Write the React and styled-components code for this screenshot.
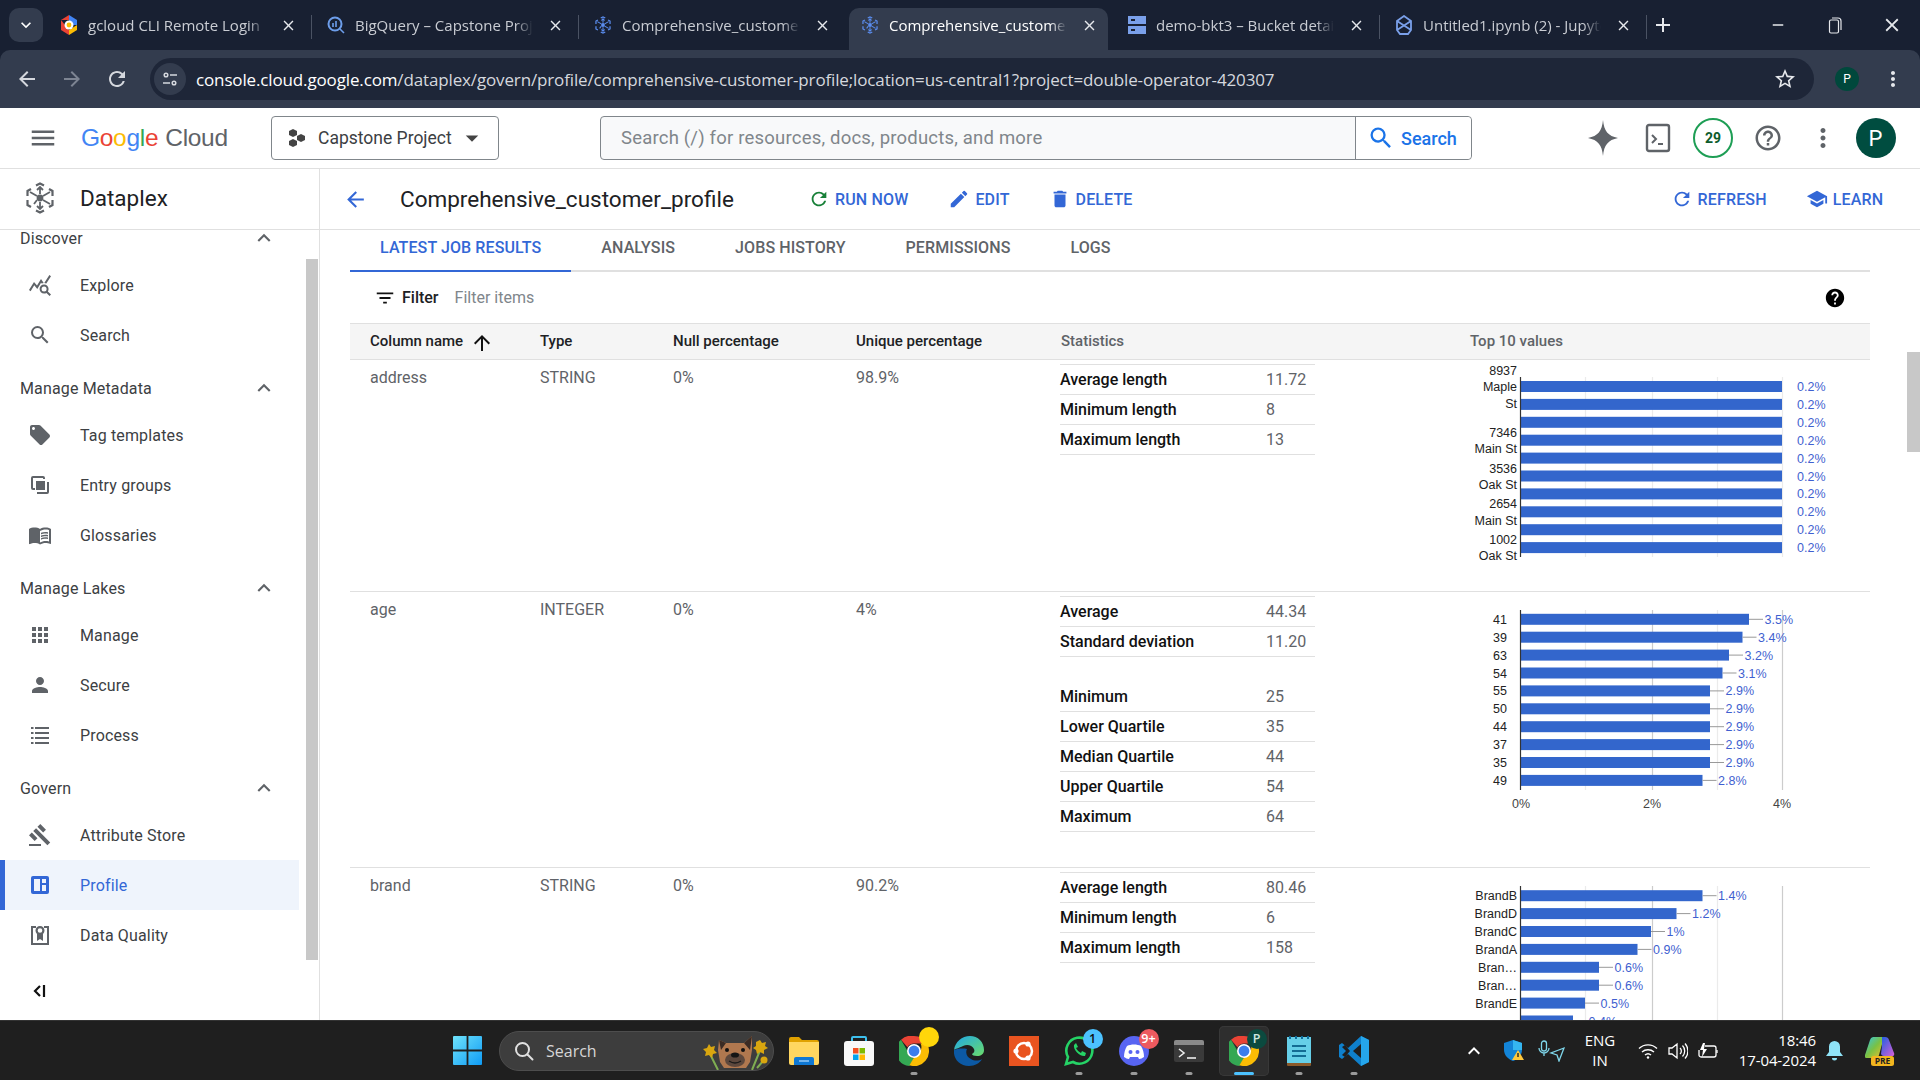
import React from "react";
import styled, { createGlobalStyle } from "styled-components";
import {
  MdMenu, MdSearch, MdLocalOffer, MdMenuBook, MdApps, MdPerson, MdGavel, MdRefresh, MdEdit, MdDelete,
  MdSchool, MdArrowBack, MdArrowForward, MdArrowUpward, MdFilterList, MdHelp, MdHelpOutline, MdMoreVert, MdExpandLess,
  MdStarBorder, MdQueryStats, MdClose, MdAdd, MdKeyboardArrowDown, MdArrowDropDown, MdRemove,
} from "react-icons/md";

const GlobalStyle = createGlobalStyle`
  html, body { margin: 0; padding: 0; background: #fff; overflow: hidden; }
  * { box-sizing: border-box; }
  body { font-family: Roboto, "Liberation Sans", sans-serif; }
`;

const Page = styled.div`
  width: 1920px;
  height: 1080px;
  display: flex;
  flex-direction: column;
  overflow: hidden;
`;

/* browser chrome */
const Chrome = styled.div`
  background: #182032;
  flex: none;
`;

const TabStrip = styled.div`
  height: 50px;
  display: flex;
  align-items: flex-end;
  padding-left: 9px;
  font-family: "Open Sans", "Liberation Sans", sans-serif;
`;

const TabMenu = styled.div`
  width: 34px;
  height: 34px;
  margin: 0 1px 8px 0;
  border-radius: 10px;
  background: #333c4e;
  color: #fff;
  display: flex;
  align-items: center;
  justify-content: center;
`;

const Tab = styled.div`
  position: relative;
  width: 259px;
  height: 42px;
  margin: 0 4px;
  display: flex;
  align-items: center;
  padding: 0 10px 8px 12px;
  border-radius: 10px 10px 0 0;
  background: ${(p) => (p.$active ? "#333c4e" : "transparent")};
  color: ${(p) => (p.$active ? "#fff" : "#c9ccd3")};
  font-size: 15px;
  &::after {
    content: "";
    display: ${(p) => (p.$sep ? "block" : "none")};
    position: absolute;
    right: -5px;
    top: 7px;
    height: 24px;
    width: 1px;
    background: #4a5263;
  }
`;

const TabIcon = styled.span`
  width: 18px;
  height: 20px;
  flex: none;
  display: flex;
  align-items: center;
  margin-right: 10px;
`;

const TabTitle = styled.span`
  width: 178px;
  white-space: nowrap;
  overflow: hidden;
  -webkit-mask-image: linear-gradient(90deg, #000 90%, transparent);
  mask-image: linear-gradient(90deg, #000 90%, transparent);
`;

const TabClose = styled(MdClose)`
  margin-left: auto;
  flex: none;
  font-size: 17px;
  color: #e6e8ec;
`;

const NewTab = styled(MdAdd)`
  margin: 0 0 13px 5px;
  font-size: 24px;
  color: #e6e8ec;
`;

const WindowControls = styled.div`
  margin-left: auto;
  height: 50px;
  display: flex;
  align-items: center;
  color: #e6e8ec;
`;

const WindowButton = styled.span`
  width: 57px;
  display: flex;
  justify-content: center;
  font-size: 20px;
`;

const Toolbar = styled.div`
  height: 58px;
  background: #333c4e;
  border-radius: 10px 10px 0 0;
  display: flex;
  align-items: center;
  padding-left: 15px;
  color: #d5d8de;
`;

const NavButton = styled.span`
  width: 45px;
  flex: none;
  display: flex;
  font-size: 24px;
  color: ${(p) => (p.$dim ? "#7d8492" : "#d5d8de")};
`;

const UrlBar = styled.div`
  width: 1664px;
  height: 42px;
  border-radius: 21px;
  background: #1e2638;
  display: flex;
  align-items: center;
  padding: 0 17px 0 4px;
`;

const TuneBadge = styled.span`
  width: 32px;
  height: 32px;
  border-radius: 50%;
  background: #333c4e;
  display: flex;
  align-items: center;
  justify-content: center;
  margin-right: 10px;
`;

const UrlText = styled.div`
  font-family: "Open Sans", "Liberation Sans", sans-serif;
  font-size: 17px;
  letter-spacing: -0.14px;
  color: #d5d8de;
  white-space: nowrap;
  b { font-weight: 400; color: #fff; }
`;

const UrlStar = styled(MdStarBorder)`
  margin-left: auto;
  font-size: 24px;
  color: #e6e8ec;
`;

const SmallAvatar = styled.span`
  width: 24px;
  height: 24px;
  margin-left: 21px;
  border-radius: 50%;
  background: #00483c;
  color: #fff;
  font-size: 12px;
  display: flex;
  align-items: center;
  justify-content: center;
`;

const ToolbarDots = styled(MdMoreVert)`
  font-size: 24px;
  margin-left: 22px;
  color: #e6e8ec;
`;

/* console header */
const Header = styled.header`
  height: 61px;
  flex: none;
  border-bottom: 1px solid #e0e0e0;
  display: flex;
  align-items: center;
  padding-left: 31px;
`;

const Burger = styled(MdMenu)`
  font-size: 30px;
  margin-left: -3px;
  color: #5f6368;
  flex: none;
`;

const Logo = styled.div`
  width: 190px;
  margin-left: 23px;
  font-family: "Liberation Sans", Arial, sans-serif;
  font-size: 24.5px;
  letter-spacing: -0.3px;
  white-space: nowrap;
`;

const Letter = styled.span`
  color: ${(p) => p.$c};
`;

const CloudWord = styled.span`
  margin-left: 7px;
  color: #5f6368;
`;

const ProjectPicker = styled.div`
  width: 228px;
  height: 44px;
  border: 1px solid #80868b;
  border-radius: 4px;
  display: flex;
  align-items: center;
  padding-left: 16px;
  font-size: 17.5px;
  color: #3c4043;
`;

const ProjectName = styled.span`
  margin-left: 12px;
`;

const ProjectCaret = styled(MdArrowDropDown)`
  font-size: 30px;
  color: #444;
  margin-left: 5px;
`;

const SearchBox = styled.div`
  width: 872px;
  height: 44px;
  margin-left: 101px;
  border: 1px solid #80868b;
  border-radius: 4px;
  background: #f8f9fa;
  display: flex;
  font-size: 18.5px;
  color: #80868b;
`;

const SearchField = styled.div`
  width: 755px;
  padding-left: 20px;
  display: flex;
  align-items: center;
  border-right: 1px solid #80868b;
  letter-spacing: 0.2px;
  white-space: nowrap;
`;

const SearchButton = styled.div`
  flex: 1;
  background: #fff;
  border-radius: 0 4px 4px 0;
  display: flex;
  align-items: center;
  padding-left: 11px;
  gap: 6px;
  font-size: 18px;
  color: #1a73e8;
  font-weight: 500;
`;

const HeaderTools = styled.div`
  margin-left: 103.5px;
  display: flex;
  align-items: center;
  color: #5f6368;
`;

const HeaderTool = styled.span`
  width: 55px;
  display: flex;
  justify-content: center;
  font-size: 28px;
`;

const TrialBadge = styled.span`
  width: 40px;
  height: 40px;
  border-radius: 50%;
  border: 2px solid #1e9e55;
  color: #0d5c2c;
  font-size: 14px;
  font-weight: 700;
  display: flex;
  align-items: center;
  justify-content: center;
`;

const Avatar = styled.span`
  width: 40px;
  height: 40px;
  margin-left: 5px;
  border-radius: 50%;
  background: #004d40;
  color: #fff;
  font-size: 22px;
  display: flex;
  align-items: center;
  justify-content: center;
`;

const Body = styled.div`
  flex: 1;
  min-height: 0;
  display: flex;
`;

/* left nav */
const Sidebar = styled.aside`
  position: relative;
  width: 320px;
  flex: none;
  border-right: 1px solid #e0e0e0;
  display: flex;
  flex-direction: column;
  overflow: hidden;
`;

const ProductBar = styled.div`
  height: 61px;
  flex: none;
  border-bottom: 1px solid #e0e0e0;
  display: flex;
  align-items: center;
  padding: 0 0 2px 24px;
  font-size: 22.5px;
  color: #202124;
  background: #fff;
  z-index: 1;
`;

const ProductName = styled.span`
  margin-left: 24px;
`;

const NavList = styled.nav`
  margin-top: -14px;
`;

const NavGroup = styled.div`
  height: 44px;
  margin-top: ${(p) => (p.$first ? 0 : 6)}px;
  width: 274px;
  padding: 0 0 0 20px;
  display: flex;
  align-items: center;
  justify-content: space-between;
  font-size: 16px;
  letter-spacing: 0.15px;
  color: #3c4043;
`;

const GroupChevron = styled(MdExpandLess)`
  font-size: 26px;
  color: #5f6368;
  margin-right: -3px;
`;

const NavItem = styled.div`
  position: relative;
  width: 299px;
  height: 50px;
  display: flex;
  align-items: center;
  font-size: 16px;
  letter-spacing: 0.15px;
  color: ${(p) => (p.$active ? "#3367d6" : "#3c4043")};
  background: ${(p) => (p.$active ? "#eff4fc" : "transparent")};
  border-left: 5px solid ${(p) => (p.$active ? "#3367d6" : "transparent")};
`;

const NavIcon = styled.span`
  width: 70px;
  padding-left: 23px;
  margin-right: 5px;
  flex: none;
  display: flex;
  font-size: 24px;
  color: ${(p) => (p.$active ? "#3367d6" : "#5f6368")};
`;

const CollapseRow = styled.div`
  height: 50px;
  margin-top: 6px;
  padding-left: 28px;
  display: flex;
  align-items: center;
`;

const SideThumb = styled.div`
  position: absolute;
  left: 306px;
  top: 90px;
  width: 12px;
  height: 701px;
  background: #c8c8c8;
`;

/* main */
const Main = styled.main`
  position: relative;
  flex: 1;
  min-width: 0;
  overflow: hidden;
`;

const MainBar = styled.div`
  height: 61px;
  border-bottom: 1px solid #e0e0e0;
  display: flex;
  align-items: center;
  padding-left: 23px;
`;

const BackArrow = styled(MdArrowBack)`
  font-size: 25px;
  color: #3367d6;
  flex: none;
`;

const Title = styled.h1`
  margin: 0 0 0 32px;
  width: 408px;
  flex: none;
  font-size: 22.5px;
  font-weight: 400;
  color: #202124;
  white-space: nowrap;
`;

const Action = styled.div`
  display: flex;
  align-items: center;
  gap: 5px;
  margin-left: ${(p) => p.$ml}px;
  font-size: 16px;
  letter-spacing: 0.15px;
  font-weight: 500;
  color: #3367d6;
  white-space: nowrap;
  svg { font-size: 22px; color: ${(p) => p.$icon || "#3367d6"}; flex: none; }
`;

const Content = styled.div`
  width: 1520px;
  margin-left: 30px;
`;

const TabBar = styled.div`
  height: 42px;
  display: flex;
  border-bottom: 2px solid #e0e0e0;
`;

const ContentTab = styled.div`
  height: 42px;
  padding: 0 30px 5px;
  display: flex;
  align-items: center;
  font-size: 16px;
  letter-spacing: 0.1px;
  font-weight: 500;
  white-space: nowrap;
  color: ${(p) => (p.$active ? "#3367d6" : "#5f6368")};
  border-bottom: 2px solid ${(p) => (p.$active ? "#3367d6" : "transparent")};
`;

const FilterBar = styled.div`
  height: 51px;
  display: flex;
  align-items: center;
  padding-left: 24px;
  font-size: 16px;
`;

const FilterLabel = styled.span`
  margin-left: 6px;
  font-weight: 500;
  color: #202124;
`;

const FilterHint = styled.span`
  margin-left: 16px;
  color: #80868b;
`;

const FilterHelp = styled(MdHelp)`
  margin-left: auto;
  margin-right: 24px;
  font-size: 22px;
  color: #000;
`;

const Grid = "170px 133px 183px 204px 410px 420px";

const TableHead = styled.div`
  height: 37px;
  padding-bottom: 1px;
  display: grid;
  grid-template-columns: ${Grid};
  align-items: center;
  background: #f5f5f5;
  border-top: 1px solid #e0e0e0;
  border-bottom: 1px solid #e0e0e0;
  font-size: 15px;
  font-weight: 500;
`;

const HeadCell = styled.div`
  padding-left: ${(p) => p.$pl ?? 20}px;
  color: ${(p) => (p.$muted ? "#5f6368" : "#202124")};
  display: flex;
  align-items: center;
  white-space: nowrap;
`;

const SortArrow = styled(MdArrowUpward)`
  font-size: 24px;
  color: #111;
  margin-left: 7px;
  margin-bottom: -3px;
`;

const TableRow = styled.div`
  height: ${(p) => p.$h}px;
  display: grid;
  grid-template-columns: ${Grid};
  border-bottom: 1px solid #e0e0e0;
`;

const Cell = styled.div`
  padding: 8px 0 0 20px;
  font-size: 16px;
  line-height: 20px;
  color: #5f6368;
`;

const StatCell = styled.div`
  padding: 4px 0 0 20px;
`;

const StatGroup = styled.div`
  width: 255px;
  margin-bottom: 25px;
  border-top: ${(p) => (p.$plain ? "none" : "1px solid #e0e0e0")};
`;

const StatRow = styled.div`
  height: 30px;
  display: grid;
  grid-template-columns: 206px 1fr;
  align-items: center;
  border-bottom: 1px solid #e0e0e0;
  font-size: 16px;
`;

const StatLabel = styled.span`
  font-weight: 500;
  color: #111;
`;

const StatValue = styled.span`
  color: #5f6368;
`;

const ChartSvg = styled.svg`
  display: block;
  overflow: visible;
  font-family: "Liberation Sans", Arial, sans-serif;
  font-size: 12.5px;
`;

const MainThumb = styled.div`
  position: absolute;
  right: 0;
  top: 183px;
  width: 13px;
  height: 100px;
  background: #c8c8c8;
`;

/* windows taskbar */
const Taskbar = styled.footer`
  height: 60px;
  flex: none;
  background: #1f1f1f;
  border-top: 1px solid #333;
  display: flex;
  align-items: center;
  padding-left: 453px;
  color: #fff;
  font-family: "Open Sans", "Liberation Sans", sans-serif;
`;

const TaskSearch = styled.div`
  position: relative;
  width: 275px;
  height: 40px;
  margin: 0 2px 0 17px;
  border-radius: 20px;
  background: #3d3d3d;
  border: 1px solid #4d4d4d;
  display: flex;
  align-items: center;
  padding-left: 14px;
  gap: 12px;
  font-size: 16px;
  color: #d6d6d6;
`;

const Mascot = styled.svg`
  position: absolute;
  right: 5px;
  top: 2px;
`;

const TaskItem = styled.div`
  position: relative;
  width: 50px;
  height: 50px;
  margin: 0 2.5px;
  border-radius: 5px;
  display: flex;
  align-items: center;
  justify-content: center;
  background: ${(p) => (p.$current ? "#2e2e2e" : "transparent")};
  box-shadow: ${(p) => (p.$current ? "inset 0 0 0 1px #383838" : "none")};
  &::after {
    content: "";
    display: ${(p) => (p.$open || p.$current ? "block" : "none")};
    position: absolute;
    bottom: 1px;
    left: 50%;
    transform: translateX(-50%);
    width: ${(p) => (p.$current ? 20 : 7)}px;
    height: 3px;
    border-radius: 2px;
    background: ${(p) => (p.$current ? "#4cc2ff" : "#9a9a9a")};
  }
`;

const Badge = styled.span`
  position: absolute;
  right: ${(p) => p.$r ?? 1}px;
  top: ${(p) => p.$t ?? 3}px;
  min-width: 20px;
  height: 20px;
  border-radius: 10px;
  background: ${(p) => p.$bg};
  color: ${(p) => p.$fg || "#fff"};
  font-size: 12.5px;
  font-weight: 600;
  display: flex;
  align-items: center;
  justify-content: center;
  padding: 0 2px;
`;

const Tray = styled.div`
  margin-left: auto;
  padding-right: 25px;
  display: flex;
  align-items: center;
`;

const TrayIcon = styled.span`
  display: flex;
  margin-left: ${(p) => p.$ml}px;
`;

const LangBlock = styled.div`
  margin-left: 18px;
  width: 34px;
  text-align: center;
  font-size: 15px;
  line-height: 20px;
  margin-bottom: 2px;
`;

const Clock = styled.div`
  margin-left: 10px;
  margin-bottom: 2px;
  width: 88px;
  text-align: right;
  font-size: 15px;
  letter-spacing: -0.1px;
  line-height: 20px;
  white-space: nowrap;
`;

/* drawings */
const DataplexMark = ({ size = 32, color = "#5f6368" }) => (
  <svg width={size} height={size} viewBox="0 0 32 32" fill="none" stroke={color} strokeWidth="2.2">
    <path d="M12 3.500l4-2 4 2M25 7l3.500 2v5M28.500 18v5L25 25M20 28.500l-4 2-4-2M7 25l-3.500-2v-5M3.500 14V9L7 7" />
    <path d="M16 5v7M13 8l3-3 3 3M16 20v7M13 24l3 3 3-3M19 14l7-4M10 22l3-4M6 10l7 4M26 22l-7-4" strokeWidth="1.8" />
    <circle cx="16" cy="16" r="3.400" fill={color} stroke="none" />
  </svg>
);

const HiveIcon = () => (
  <svg width="18" height="20" viewBox="0 0 18 20" fill="#444">
    <path d="M5 1l4 2v4l-4 2-4-2V3zM13 6l4 2v4l-4 2-4-2V8zM5 11l4 2v4l-4 2-4-2v-4z" />
  </svg>
);

const TerminalIcon = () => (
  <svg width="26" height="30" viewBox="0 0 26 30" fill="none" stroke="#5f6368" strokeWidth="2.4">
    <rect x="2" y="2" width="22" height="26" rx="2" />
    <path d="M7 12l4 4-4 4M13 21h5" strokeWidth="2" />
  </svg>
);

const Sparkle = () => (
  <svg width="30" height="36" viewBox="0 0 30 36" fill="#5f6368">
    <path d="M15 0c1 11 5 16 15 18-10 2-14 7-15 18-1-11-5-16-15-18 10-2 14-7 15-18z" />
  </svg>
);

const EntryIcon = () => (
  <svg width="24" height="24" viewBox="0 0 24 24" fill="none" stroke="currentColor" strokeWidth="2">
    <path d="M7 16H5a1 1 0 0 1-1-1V5a1 1 0 0 1 1-1h10a1 1 0 0 1 1 1v1M20 9v10a1 1 0 0 1-1 1H9" />
    <rect x="8" y="8" width="9" height="9" fill="currentColor" stroke="none" />
  </svg>
);

const ProcessIcon = () => (
  <svg width="24" height="24" viewBox="0 0 24 24" fill="currentColor">
    {[4, 9, 14, 19].map((y) => (
      <g key={y}>
        <rect x="3" y={y} width="2.500" height="2" />
        <rect x="7" y={y} width="14" height="2" />
      </g>
    ))}
  </svg>
);

const ProfileIcon = () => (
  <svg width="24" height="24" viewBox="0 0 24 24">
    <rect x="3" y="3" width="18" height="18" rx="2" fill="#3367d6" />
    <path d="M6 6h6v12H6zM14 6h4v4h-4zM14 12h4v6h-4z" fill="#fff" opacity="0.92" />
  </svg>
);

const QualityIcon = () => (
  <svg width="24" height="24" viewBox="0 0 24 24" fill="none" stroke="currentColor" strokeWidth="2">
    <path d="M8 4H4v17h16V4h-4" />
    <circle cx="12" cy="7.500" r="3.400" strokeWidth="2.200" />
    <path d="M9 11v7l3-2 3 2v-7" fill="currentColor" stroke="none" />
  </svg>
);

const CollapseIcon = () => (
  <svg width="24" height="24" viewBox="0 0 24 24" fill="none" stroke="#111" strokeWidth="2.2">
    <path d="M12 7l-5 5 5 5M16 6v12" />
  </svg>
);

const GcloudFav = () => (
  <svg width="18" height="20" viewBox="0 0 18 20">
    <path d="M9 0l8 5v5H9z" fill="#4285f4" />
    <path d="M17 10v5l-8 5v-5z" fill="#fbbc04" />
    <path d="M9 20l-8-5V5l4 5 4 5z" fill="#ea4335" />
    <path d="M1 5l8-5v5z" fill="#ea4335" />
    <circle cx="9" cy="10" r="4.500" fill="#fff" />
    <circle cx="9" cy="10" r="2.400" fill="#fbbc04" />
  </svg>
);

const QueryFav = () => (
  <svg width="18" height="18" viewBox="0 0 18 18" fill="none" stroke="#6d9eeb" strokeWidth="2">
    <circle cx="8" cy="8" r="6.500" />
    <path d="M13 13l4 4M6 7v4M9 5v6" strokeWidth="1.6" />
  </svg>
);

const BucketFav = () => (
  <svg width="18" height="18" viewBox="0 0 18 18">
    <path d="M0 0h18v8H0zM0 10h18v8H0z" fill="#7aa0ea" />
    <path d="M3 3h4v2H3zM3 13h4v2H3z" fill="#182032" />
  </svg>
);

const JupyterFav = () => (
  <svg width="18" height="20" viewBox="0 0 18 20" fill="none" stroke="#7aa0ea" strokeWidth="1.8">
    <path d="M9 1l7 5v9l-3 4H5l-3-4V6zM2 6l14 9M16 6L2 15" />
  </svg>
);

const TuneIcon = () => (
  <svg width="16" height="16" viewBox="0 0 16 16" fill="none" stroke="#d5d8de" strokeWidth="1.5">
    <circle cx="4" cy="4" r="1.800" />
    <path d="M8 4h7M1 12h7" />
    <circle cx="12" cy="12" r="1.800" />
  </svg>
);

const RestoreIcon = () => (
  <svg width="14" height="20" viewBox="0 0 14 20" fill="none" stroke="#e6e8ec" strokeWidth="1.2">
    <rect x="1.500" y="5" width="9" height="13" rx="1.500" />
    <path d="M4 3h6a3 3 0 0 1 3 3v9" />
  </svg>
);

const WinLogo = () => (
  <svg width="29" height="29" viewBox="0 0 29 29">
    <defs>
      <linearGradient id="win" x1="0" y1="0" x2="1" y2="1">
        <stop offset="0" stopColor="#6fe3fb" />
        <stop offset="1" stopColor="#0f9bf5" />
      </linearGradient>
    </defs>
    <path d="M0 1a1 1 0 0 1 1-1h12.600v13.600H0zM15.400 0H28a1 1 0 0 1 1 1v12.600H15.400zM0 15.400h13.600V29H1a1 1 0 0 1-1-1zM15.400 15.400H29V28a1 1 0 0 1-1 1H15.400z" fill="url(#win)" />
  </svg>
);

const TaskSearchIcon = () => (
  <svg width="20" height="20" viewBox="0 0 20 20" fill="none" stroke="#e0e0e0" strokeWidth="2">
    <circle cx="8.500" cy="8.500" r="6.500" />
    <path d="M13.500 13.500l5 5" strokeLinecap="round" />
  </svg>
);

const DogMascot = () => (
  <Mascot width="66" height="36" viewBox="0 0 66 36">
    <path d="M7 18l9 18M59 14l-9 22M62 26l-7 8" stroke="#7fae52" strokeWidth="2" fill="none" />
    <g fill="#d9a60f">
      <path d="M7 10l2 3 4-1-1 4 3 3-4 1-1 4-3-3-4 1 1-4-3-3 4-1z" />
      <path d="M58 6l2 3 4-1-1 4 3 2-4 2 0 4-4-2-3 2-1-4-3-2 3-2 0-4z" />
      <circle cx="62" cy="26" r="3.500" />
    </g>
    <path d="M17 6l7 3h18l8-7 0 14-2 12-4 6H22l-4-6-2-12z" fill="#b0784f" />
    <path d="M17 6l7 3-5 7zM50 2l-8 7 6 7z" fill="#3a2b24" />
    <ellipse cx="33" cy="26" rx="10" ry="7" fill="#5d483d" />
    <ellipse cx="33" cy="21" rx="4" ry="2.600" fill="#151515" />
    <path d="M27 27q6 4 12 0" stroke="#1a1a1a" strokeWidth="1.4" fill="none" />
    <circle cx="25" cy="16" r="2" fill="#111" />
    <circle cx="41" cy="16" r="2" fill="#111" />
  </Mascot>
);

const FolderIcon = () => (
  <svg width="30" height="28" viewBox="0 0 30 28">
    <path d="M0 2a2 2 0 0 1 2-2h8l3 3h15a2 2 0 0 1 2 2v3H0z" fill="#e0a100" />
    <path d="M0 5h30v21a2 2 0 0 1-2 2H2a2 2 0 0 1-2-2z" fill="#ffd660" />
    <path d="M5 28v-6a2 2 0 0 1 2-2h16a2 2 0 0 1 2 2v6z" fill="#0f78d4" />
    <path d="M10 24h10" stroke="#b7e0ff" strokeWidth="1.2" />
  </svg>
);

const StoreIcon = () => (
  <svg width="30" height="30" viewBox="0 0 30 30">
    <path d="M8 6V2a1 1 0 0 1 1-1h12a1 1 0 0 1 1 1v4" fill="none" stroke="#3dc0ee" strokeWidth="2" />
    <rect x="0" y="5" width="30" height="25" rx="3" fill="#f8f8f8" />
    <path d="M9 12h5.500v5.500H9z" fill="#f25022" />
    <path d="M15.500 12H21v5.500h-5.500z" fill="#7fba00" />
    <path d="M9 18.500h5.500V24H9z" fill="#00a4ef" />
    <path d="M15.500 18.500H21V24h-5.500z" fill="#ffb900" />
  </svg>
);

const ChromeIcon = () => (
  <svg width="30" height="30" viewBox="0 0 30 30">
    <path d="M15 0a15 15 0 0 1 13 7.500H15a7.500 7.500 0 0 0-6.500 3.750L2 3.800A15 15 0 0 1 15 0z" fill="#ea4335" />
    <path d="M2 3.800l6.500 11.200A7.500 7.500 0 0 0 15 22.500L10.400 30A15 15 0 0 1 2 3.800z" fill="#34a853" />
    <path d="M28 7.500A15 15 0 0 1 10.400 29.300l6.500-11A7.500 7.500 0 0 0 21.500 7.500z" fill="#fbbc04" />
    <circle cx="15" cy="15" r="7" fill="#fff" />
    <circle cx="15" cy="15" r="5.400" fill="#3b7ded" />
  </svg>
);

const EdgeIcon = () => (
  <svg width="30" height="30" viewBox="0 0 30 30">
    <defs>
      <linearGradient id="edge" x1="0" y1="0" x2="1" y2="1">
        <stop offset="0" stopColor="#1fa8e8" />
        <stop offset="1" stopColor="#6bdc6a" />
      </linearGradient>
    </defs>
    <path d="M0 14C1 6 8 0 16 0c8 0 14 6 14 14 0 4-3 6-7 6-3 0-5-1-5-2 2-1 3-3 2-5-2-4-7-5-11-3-4 2-8 3-9 4z" fill="url(#edge)" />
    <path d="M0 14c-1 8 5 16 15 16 6 0 11-3 13-7-3 2-8 2-11 0-4-2-6-6-4-10-5-1-11 0-13 1z" fill="#0c59a4" />
  </svg>
);

const UbuntuIcon = () => (
  <svg width="30" height="30" viewBox="0 0 30 30">
    <rect width="30" height="30" fill="#e95420" />
    <circle cx="15" cy="15" r="8" fill="none" stroke="#fff" strokeWidth="2.500" />
    <circle cx="7" cy="15" r="2.600" fill="#fff" />
    <circle cx="19" cy="8" r="2.600" fill="#fff" />
    <circle cx="19" cy="22" r="2.600" fill="#fff" />
  </svg>
);

const WhatsappIcon = () => (
  <svg width="30" height="30" viewBox="0 0 30 30" fill="none" stroke="#25d366" strokeWidth="2.600">
    <path d="M2 28l2-7a13 13 0 1 1 5 5z" />
    <path d="M10 9c-1 5 6 12 11 11l1-3-4-2-1 2c-2-1-4-3-5-5l2-1-2-4z" fill="#25d366" stroke="none" />
  </svg>
);

const DiscordIcon = () => (
  <svg width="30" height="30" viewBox="0 0 30 30">
    <circle cx="15" cy="15" r="15" fill="#5865f2" />
    <path d="M8 10c4-2 10-2 14 0 2 3 3 7 3 11-2 1-3 2-5 2l-1-2H11l-1 2c-2 0-3-1-5-2 0-4 1-8 3-11z" fill="#fff" />
    <circle cx="11.500" cy="16" r="2" fill="#5865f2" />
    <circle cx="18.500" cy="16" r="2" fill="#5865f2" />
  </svg>
);

const ConsoleIcon = () => (
  <svg width="30" height="22" viewBox="0 0 30 22">
    <rect width="30" height="22" rx="2" fill="#3a3a3a" />
    <path d="M0 2a2 2 0 0 1 2-2h26a2 2 0 0 1 2 2v3H0z" fill="#8a8a8a" />
    <path d="M5 9l5 4-5 4" fill="none" stroke="#eee" strokeWidth="1.6" />
    <path d="M13 18h9" stroke="#eee" strokeWidth="1.6" />
  </svg>
);

const NotepadIcon = () => (
  <svg width="24" height="30" viewBox="0 0 24 30">
    <rect y="1" width="24" height="29" rx="1" fill="#8b5a2b" />
    <rect y="1" width="24" height="26" fill="#66cfe8" />
    <path d="M5 10h14M5 15h14M5 20h14" stroke="#146c94" strokeWidth="2.200" />
    <path d="M3 0v3M9 0v3M15 0v3M21 0v3" stroke="#0f6d9c" strokeWidth="2" />
  </svg>
);

const VscodeIcon = () => (
  <svg width="30" height="30" viewBox="0 0 30 30">
    <path d="M22 0l8 4v22l-8 4-13-12-6 5-3-2v-12l3-2 6 5z" fill="#0f80cc" />
    <path d="M22 8l-8 7 8 7z" fill="#1f1f1f" />
    <path d="M3 11l3-2 5 6-5 6-3-2 4-4z" fill="#1f1f1f" />
    <path d="M22 0l8 4v22l-8 4z" fill="#25a6ec" />
  </svg>
);

const ShieldIcon = () => (
  <svg width="20" height="21" viewBox="0 0 20 21">
    <path d="M9 0l9 3v7c0 5-4 9-9 11-5-2-9-6-9-11V3z" fill="#1384d7" />
    <path d="M9 0l9 3v7H9z" fill="#35b6f0" />
    <path d="M14 10l6 10H8z" fill="#ffc83d" />
    <path d="M14 13v4" stroke="#222" strokeWidth="1.4" />
  </svg>
);

const MicShareIcon = () => (
  <svg width="27" height="22" viewBox="0 0 27 22" fill="none" stroke="#7fd6ea" strokeWidth="1.3">
    <rect x="3.500" y="1" width="5" height="10" rx="2.500" />
    <path d="M1 8a5 5 0 0 0 10 0M6 13v3" />
    <path d="M26 8l-13 5 6 2 2 6z" />
  </svg>
);

const WifiIcon = () => (
  <svg width="20" height="16" viewBox="0 0 20 16" fill="none" stroke="#fff" strokeWidth="1.4">
    <path d="M1 5.500a13 13 0 0 1 18 0M4 9a9 9 0 0 1 12 0M7 12a4.500 4.500 0 0 1 6 0" />
    <circle cx="10" cy="14.500" r="1.200" fill="#fff" stroke="none" />
  </svg>
);

const VolumeIcon = () => (
  <svg width="20" height="18" viewBox="0 0 20 18" fill="none" stroke="#fff" strokeWidth="1.3">
    <path d="M1 6h3l5-4v14l-5-4H1zM12 6a4 4 0 0 1 0 6M14.500 3.500a8 8 0 0 1 0 11M17 1.500a11 11 0 0 1 0 15" />
  </svg>
);

const BatteryIcon = () => (
  <svg width="20" height="16" viewBox="0 0 20 16" fill="none" stroke="#fff" strokeWidth="1.3">
    <path d="M7 3h9a2 2 0 0 1 2 2v7a2 2 0 0 1-2 2H3a2 2 0 0 1-2-2V7" />
    <path d="M19 7v3" />
    <path d="M5 0L2 7h3l-1 7 5-8H6l1-6z" fill="#fff" stroke="none" />
  </svg>
);

const BellIcon = () => (
  <svg width="17" height="20" viewBox="0 0 17 20" fill="#8fe3f7">
    <path d="M8.500 0A5.500 5.500 0 0 1 14 5.500V11l3 4H0l3-4V5.500A5.500 5.500 0 0 1 8.500 0zM6 17h5a2.500 2.500 0 0 1-5 0z" />
  </svg>
);

const CopilotIcon = () => (
  <svg width="30" height="30" viewBox="0 0 30 30">
    <defs>
      <linearGradient id="cop" x1="0" y1="0" x2="1" y2="1">
        <stop offset="0" stopColor="#2fc7ee" />
        <stop offset="0.5" stopColor="#7ac143" />
        <stop offset="1" stopColor="#f6c02c" />
      </linearGradient>
      <linearGradient id="cop2" x1="0" y1="0" x2="1" y2="1">
        <stop offset="0" stopColor="#1c5fe0" />
        <stop offset="1" stopColor="#d860d8" />
      </linearGradient>
    </defs>
    <path d="M8 1h11l-5 18a4 4 0 0 1-4 3H2a2 2 0 0 1-2-3l5-15a4 4 0 0 1 3-3z" fill="url(#cop)" />
    <path d="M17 1h3a4 4 0 0 1 4 3l5 13a2 2 0 0 1-2 3h-8a3 3 0 0 1-3-2l1-8z" fill="url(#cop2)" />
    <rect x="6" y="20" width="23" height="10" rx="2.500" fill="#f3b61f" />
    <text x="17.500" y="28" textAnchor="middle" fontSize="8.500" fontWeight="700" fontFamily="Open Sans, sans-serif" fill="#222">PRE</text>
  </svg>
);

/* chart helper; x is measured from the left of the top values cell */
const AXIS_X = 71;
const BLUE = "#3366cc";

const BarChart = ({ top, height, bars, bottomAxis, strong, labels, firstBar, flush }) => (
  <ChartSvg width="420" height={height}>
    {[135, 202, 267, 332].map((x, i) => (
      <line
        key={x}
        x1={x + 0.5}
        x2={x + 0.5}
        y1={top}
        y2={top + 180 + (flush ? 60 : 0)}
        stroke={strong && i % 2 === 1 ? "#cccccc" : "#ebebeb"}
        strokeWidth="1.2"
      />
    ))}
    {bars.map((b, i) => {
      const y = firstBar + i * 17.9;
      return (
        <g key={i}>
          <rect x={AXIS_X} y={y - 5.5} width={b.w} height={11} fill={BLUE} />
          {!b.far && <line x1={AXIS_X + b.w} x2={AXIS_X + b.w + 14} y1={y} y2={y} stroke="#999" />}
          <text x={b.far ? 347 : AXIS_X + b.w + 15.5} y={y + 4.5} fill="#3f5fd0">{b.value}</text>
          {b.label && <text x={b.labelX || 67} y={y + 4.5} textAnchor="end" fill="#222">{b.label}</text>}
        </g>
      );
    })}
    {labels && labels.map((l) => (
      <text key={l.y} x="67" y={l.y + 4.5} textAnchor="end" fill="#222">{l.t}</text>
    ))}
    <line x1={AXIS_X - 0.5} x2={AXIS_X - 0.5} y1={top} y2={top + 180 + (flush ? 60 : 0)} stroke="#333" strokeWidth="1.2" />
    {bottomAxis && ["0%", "2%", "4%"].map((t, i) => (
      <text key={t} x={[71, 202, 332][i]} y={top + 198} textAnchor="middle" fill="#444">{t}</text>
    ))}
  </ChartSvg>
);

const tabs = [
  { title: "gcloud CLI Remote Login", icon: <GcloudFav />, sep: true },
  { title: "BigQuery – Capstone Project", icon: <QueryFav />, sep: true },
  { title: "Comprehensive_customer_profile", icon: <DataplexMark size={18} color="#5b8def" /> },
  { title: "Comprehensive_customer_profile", icon: <DataplexMark size={18} color="#5b8def" />, active: true },
  { title: "demo-bkt3 – Bucket details", icon: <BucketFav />, sep: true },
  { title: "Untitled1.ipynb (2) - JupyterLab", icon: <JupyterFav />, sep: true },
];

const nav = [
  { group: "Discover", items: [{ t: "Explore", i: <MdQueryStats /> }, { t: "Search", i: <MdSearch /> }] },
  {
    group: "Manage Metadata",
    items: [
      { t: "Tag templates", i: <MdLocalOffer /> },
      { t: "Entry groups", i: <EntryIcon /> },
      { t: "Glossaries", i: <MdMenuBook /> },
    ],
  },
  {
    group: "Manage Lakes",
    items: [
      { t: "Manage", i: <MdApps /> },
      { t: "Secure", i: <MdPerson /> },
      { t: "Process", i: <ProcessIcon /> },
    ],
  },
  {
    group: "Govern",
    items: [
      { t: "Attribute Store", i: <MdGavel /> },
      { t: "Profile", i: <ProfileIcon />, active: true },
      { t: "Data Quality", i: <QualityIcon /> },
    ],
  },
];

const addressBars = Array.from({ length: 10 }, () => ({ w: 261, value: "0.2%", far: true }));
const addressLabels = [
  { y: 10, t: "8937" }, { y: 26, t: "Maple" }, { y: 43, t: "St" }, { y: 72, t: "7346" }, { y: 88, t: "Main St" },
  { y: 108, t: "3536" }, { y: 124, t: "Oak St" }, { y: 143, t: "2654" }, { y: 160, t: "Main St" },
  { y: 179, t: "1002" }, { y: 195, t: "Oak St" },
];

const ageBars = [
  ["41", "3.5%", 228], ["39", "3.4%", 221.5], ["63", "3.2%", 208], ["54", "3.1%", 201.5], ["55", "2.9%", 189],
  ["50", "2.9%", 189], ["44", "2.9%", 189], ["37", "2.9%", 189], ["35", "2.9%", 189], ["49", "2.8%", 181.5],
].map(([label, value, w]) => ({ label, value, w, labelX: 57 }));

const brandBars = [
  ["BrandB", "1.4%", 181.5], ["BrandD", "1.2%", 155.5], ["BrandC", "1%", 130], ["BrandA", "0.9%", 116.5],
  ["Bran…", "0.6%", 78], ["Bran…", "0.6%", 78], ["BrandE", "0.5%", 64], ["", "0.4%", 52],
].map(([label, value, w]) => ({ label, value, w }));

const columns = [
  {
    name: "address", type: "STRING", nulls: "0%", unique: "98.9%", h: 232,
    stats: [[["Average length", "11.72"], ["Minimum length", "8"], ["Maximum length", "13"]]],
    chart: <BarChart top={17} height={231} bars={addressBars} labels={addressLabels} firstBar={26.5} />,
  },
  {
    name: "age", type: "INTEGER", nulls: "0%", unique: "4%", h: 276,
    stats: [
      [["Average", "44.34"], ["Standard deviation", "11.20"]],
      [["Minimum", "25"], ["Lower Quartile", "35"], ["Median Quartile", "44"], ["Upper Quartile", "54"], ["Maximum", "64"]],
    ],
    chart: <BarChart top={18} height={275} bars={ageBars} bottomAxis strong firstBar={27.3} />,
  },
  {
    name: "brand", type: "STRING", nulls: "0%", unique: "90.2%", h: 260,
    stats: [[["Average length", "80.46"], ["Minimum length", "6"], ["Maximum length", "158"]]],
    chart: <BarChart top={18} height={259} bars={brandBars} strong flush firstBar={27.7} />,
  },
];

const taskApps = [
  { icon: <FolderIcon /> },
  { icon: <StoreIcon /> },
  { icon: <ChromeIcon />, open: true, badge: { bg: "#ffd60a", text: "", r: 0, t: 1 } },
  { icon: <EdgeIcon /> },
  { icon: <UbuntuIcon /> },
  { icon: <WhatsappIcon />, open: true, badge: { bg: "#4cc2ff", fg: "#111", text: "1" } },
  { icon: <DiscordIcon />, open: true, badge: { bg: "#ed5a5f", text: "9+", r: 0 } },
  { icon: <ConsoleIcon />, open: true },
  { icon: <ChromeIcon />, current: true, badge: { bg: "#0b4a3f", fg: "#cfe8e0", text: "P", r: 2, t: 3 } },
  { icon: <NotepadIcon />, open: true },
  { icon: <VscodeIcon />, open: true },
];

export default function App() {
  return (
    <Page>
      <GlobalStyle />
      <Chrome>
        <TabStrip>
          <TabMenu><MdKeyboardArrowDown size={20} /></TabMenu>
          {tabs.map((tab, i) => (
            <Tab key={i} $active={tab.active} $sep={tab.sep}>
              <TabIcon>{tab.icon}</TabIcon>
              <TabTitle>{tab.title}</TabTitle>
              <TabClose />
            </Tab>
          ))}
          <NewTab />
          <WindowControls>
            <WindowButton><MdRemove size={18} /></WindowButton>
            <WindowButton><RestoreIcon /></WindowButton>
            <WindowButton><MdClose size={22} /></WindowButton>
          </WindowControls>
        </TabStrip>
        <Toolbar>
          <NavButton><MdArrowBack /></NavButton>
          <NavButton $dim><MdArrowForward /></NavButton>
          <NavButton><MdRefresh /></NavButton>
          <UrlBar>
            <TuneBadge><TuneIcon /></TuneBadge>
            <UrlText>
              <b>console.cloud.google.com</b>/dataplex/govern/profile/comprehensive-customer-profile;location=us-central1?project=double-operator-420307
            </UrlText>
            <UrlStar />
          </UrlBar>
          <SmallAvatar>P</SmallAvatar>
          <ToolbarDots />
        </Toolbar>
      </Chrome>

      <Header>
        <Burger />
        <Logo>
          <Letter $c="#4285f4">G</Letter>
          <Letter $c="#ea4335">o</Letter>
          <Letter $c="#fbbc04">o</Letter>
          <Letter $c="#4285f4">g</Letter>
          <Letter $c="#34a853">l</Letter>
          <Letter $c="#ea4335">e</Letter>
          <CloudWord>Cloud</CloudWord>
        </Logo>
        <ProjectPicker>
          <HiveIcon />
          <ProjectName>Capstone Project</ProjectName>
          <ProjectCaret />
        </ProjectPicker>
        <SearchBox>
          <SearchField>Search (/) for resources, docs, products, and more</SearchField>
          <SearchButton><MdSearch size={28} />Search</SearchButton>
        </SearchBox>
        <HeaderTools>
          <HeaderTool><Sparkle /></HeaderTool>
          <HeaderTool><TerminalIcon /></HeaderTool>
          <HeaderTool><TrialBadge>29</TrialBadge></HeaderTool>
          <HeaderTool><MdHelpOutline size={30} /></HeaderTool>
          <HeaderTool><MdMoreVert size={30} /></HeaderTool>
          <Avatar>P</Avatar>
        </HeaderTools>
      </Header>

      <Body>
        <Sidebar>
          <ProductBar>
            <DataplexMark />
            <ProductName>Dataplex</ProductName>
          </ProductBar>
          <NavList>
            {nav.map((section, gi) => (
              <React.Fragment key={section.group}>
                <NavGroup $first={gi === 0}>
                  {section.group}
                  <GroupChevron />
                </NavGroup>
                {section.items.map((item) => (
                  <NavItem key={item.t} $active={item.active}>
                    <NavIcon $active={item.active}>{item.i}</NavIcon>
                    {item.t}
                  </NavItem>
                ))}
              </React.Fragment>
            ))}
            <CollapseRow><CollapseIcon /></CollapseRow>
          </NavList>
          <SideThumb />
        </Sidebar>

        <Main>
          <MainBar>
            <BackArrow />
            <Title>Comprehensive_customer_profile</Title>
            <Action $ml={0} $icon="#188038"><MdRefresh />RUN NOW</Action>
            <Action $ml={40}><MdEdit />EDIT</Action>
            <Action $ml={39}><MdDelete />DELETE</Action>
            <Action $ml={538}><MdRefresh />REFRESH</Action>
            <Action $ml={39}><MdSchool />LEARN</Action>
          </MainBar>
          <Content>
            <TabBar>
              <ContentTab $active>LATEST JOB RESULTS</ContentTab>
              <ContentTab>ANALYSIS</ContentTab>
              <ContentTab>JOBS HISTORY</ContentTab>
              <ContentTab>PERMISSIONS</ContentTab>
              <ContentTab>LOGS</ContentTab>
            </TabBar>
            <FilterBar>
              <MdFilterList size={22} color="#111" />
              <FilterLabel>Filter</FilterLabel>
              <FilterHint>Filter items</FilterHint>
              <FilterHelp />
            </FilterBar>
            <TableHead>
              <HeadCell>Column name<SortArrow /></HeadCell>
              <HeadCell>Type</HeadCell>
              <HeadCell>Null percentage</HeadCell>
              <HeadCell>Unique percentage</HeadCell>
              <HeadCell $muted $pl={21}>Statistics</HeadCell>
              <HeadCell $muted>Top 10 values</HeadCell>
            </TableHead>
            {columns.map((col) => (
              <TableRow key={col.name} $h={col.h}>
                <Cell>{col.name}</Cell>
                <Cell>{col.type}</Cell>
                <Cell>{col.nulls}</Cell>
                <Cell>{col.unique}</Cell>
                <StatCell>
                  {col.stats.map((group, gi) => (
                    <StatGroup key={gi} $plain={gi > 0}>
                      {group.map(([label, value]) => (
                        <StatRow key={label}>
                          <StatLabel>{label}</StatLabel>
                          <StatValue>{value}</StatValue>
                        </StatRow>
                      ))}
                    </StatGroup>
                  ))}
                </StatCell>
                <div>{col.chart}</div>
              </TableRow>
            ))}
          </Content>
          <MainThumb />
        </Main>
      </Body>

      <Taskbar>
        <WinLogo />
        <TaskSearch>
          <TaskSearchIcon />
          Search
          <DogMascot />
        </TaskSearch>
        {taskApps.map((app, i) => (
          <TaskItem key={i} $open={app.open} $current={app.current}>
            {app.icon}
            {app.badge && (
              <Badge $bg={app.badge.bg} $fg={app.badge.fg} $r={app.badge.r} $t={app.badge.t}>
                {app.badge.text}
              </Badge>
            )}
          </TaskItem>
        ))}
        <Tray>
          <MdExpandLess size={24} />
          <TrayIcon $ml={18}><ShieldIcon /></TrayIcon>
          <TrayIcon $ml={14}><MicShareIcon /></TrayIcon>
          <LangBlock>ENG<br />IN</LangBlock>
          <TrayIcon $ml={21}><WifiIcon /></TrayIcon>
          <TrayIcon $ml={10}><VolumeIcon /></TrayIcon>
          <TrayIcon $ml={10}><BatteryIcon /></TrayIcon>
          <Clock>18:46<br />17-04-2024</Clock>
          <TrayIcon $ml={10}><BellIcon /></TrayIcon>
          <TrayIcon $ml={22}><CopilotIcon /></TrayIcon>
        </Tray>
      </Taskbar>
    </Page>
  );
}
